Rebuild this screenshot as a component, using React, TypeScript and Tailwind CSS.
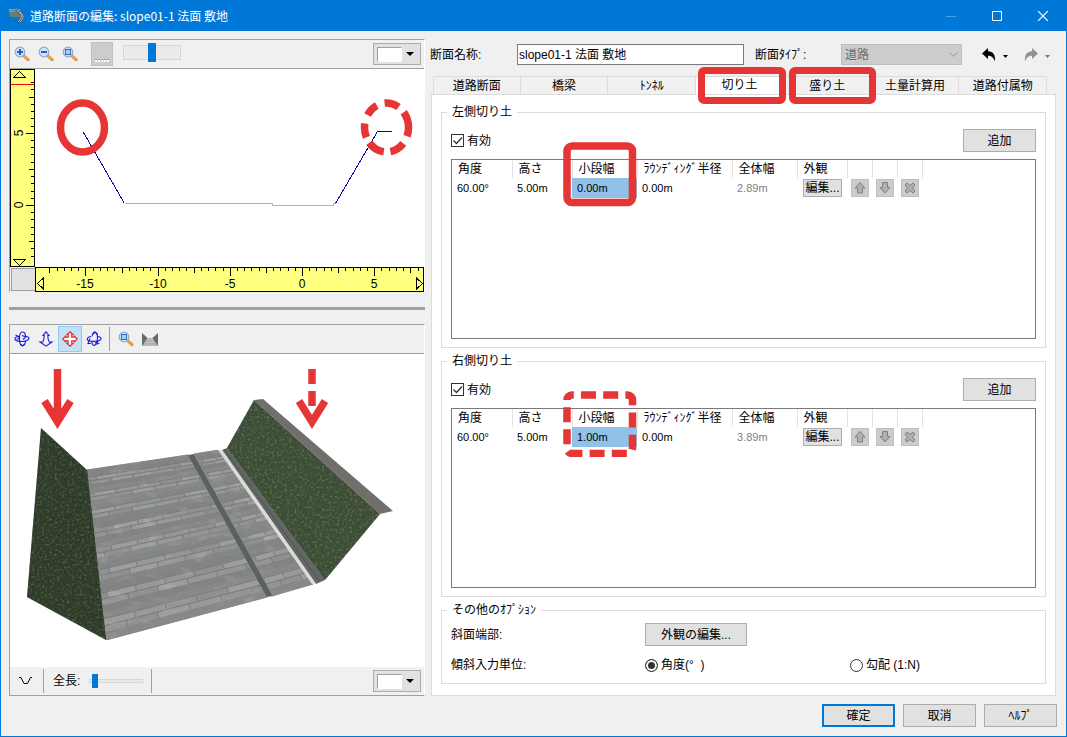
import type { ReactNode } from "react";

const CUT_ROWS = [
  { id: "left", title: "左側切り土", width: "0.00m", total: "2.89m", dashed: false },
  { id: "right", title: "右側切り土", width: "1.00m", total: "3.89m", dashed: true },
];

const TABS = ["道路断面", "橋梁", "ﾄﾝﾈﾙ", "切り土", "盛り土", "土量計算用", "道路付属物"];

type Point = [number, number];

function toPoints(points: Point[]) {
  return points.map((p) => p.map((n) => n.toFixed(1)).join(",")).join(" ");
}

function Button({ children, className = "", primary = false }: { children: ReactNode; className?: string; primary?: boolean }) {
  return (
    <button
      type="button"
      className={`flex h-[23px] items-center justify-center bg-[#e1e1e1] hover:bg-[#e5f1fb] ${
        primary ? "border-2 border-[#0078d7]" : "border border-[#adadad]"
      } ${className}`}
    >
      {children}
    </button>
  );
}

function MagnifierIcon({ kind }: { kind: "in" | "out" | "fit" }) {
  return (
    <svg className="size-4" viewBox="0 0 16 16" fill="none">
      <path d="M9.5 9.5L14 13.7" stroke="#c98a45" strokeWidth="3" strokeLinecap="round" />
      <path d="M10 9.8L14 13.4" stroke="#f7a53c" strokeWidth="1.8" strokeLinecap="round" />
      <circle cx="6" cy="6" r="4.8" fill="#cfe4fa" stroke="#93abc4" strokeWidth="1.2" />
      {kind === "in" && <path d="M3 6h6M6 3v6" stroke="#1f63c4" strokeWidth="2" />}
      {kind === "out" && <path d="M3 6h6" stroke="#1f63c4" strokeWidth="2" />}
      {kind === "fit" && <rect x="3.5" y="3.5" width="5" height="5" fill="#a9cdf5" stroke="#2d6fc4" />}
    </svg>
  );
}

function ColorDropdown({ label }: { label: string }) {
  return (
    <button type="button" aria-label={label} className="ml-auto flex h-[22px] w-12 items-center border border-[#adadad] bg-[#e1e1e1] pl-[3px]">
      <span className="h-[15px] w-[25px] border border-[#a0a0a0] border-r-white border-b-white bg-white" />
      <svg className="ml-1 h-1 w-2" viewBox="0 0 8 4">
        <path d="M0 0h8L4 4z" />
      </svg>
    </button>
  );
}

function ToolButton({ label, children, className = "" }: { label: string; children: ReactNode; className?: string }) {
  return (
    <button type="button" aria-label={label} title={label} className={`flex h-[26px] w-6 items-center justify-center ${className}`}>
      {children}
    </button>
  );
}

// position of a value on either ruler
const ORIGIN_X = 292;
const ORIGIN_Y = 136;
const HALF_UNIT = 7.22;

function tickLength(i: number) {
  if (i % 10 === 0) return 8;
  return i % 5 === 0 ? 5 : 3;
}

function CrossSection() {
  const xTicks = Array.from({ length: 52 }, (_, i) => i - 35);
  const yTicks = Array.from({ length: 25 }, (_, i) => i - 7);
  return (
    <svg className="block h-auto w-full bg-white" viewBox="0 0 414 223" shapeRendering="crispEdges">
      <rect x="0.5" y="0.5" width="24" height="197" fill="#ffff80" stroke="#000" />
      {yTicks.map((i) => {
        const y = Math.round(ORIGIN_Y - i * HALF_UNIT) + 0.5;
        return y > 3 && <path key={i} d={`M24 ${y}h-${tickLength(i)}`} stroke="#000" />;
      })}
      <path d="M1 15.5h23" stroke="#f00" />
      <path d="M3.5 8.5h12l-6-6zM3.5 190.5h12l-6 6z" fill="none" stroke="#000" />

      <rect x="0" y="198" width="25" height="25" fill="#f0f0f0" />
      <rect x="1.5" y="199.5" width="24" height="22" fill="#e1e1e1" stroke="#a0a0a0" />
      <rect x="25.5" y="198.5" width="388" height="24" fill="#ffff80" stroke="#000" />
      {xTicks.map((i) => (
        <path key={i} d={`M${Math.round(ORIGIN_X + i * HALF_UNIT) + 0.5} 199v${tickLength(i)}`} stroke="#000" />
      ))}
      <path d="M33.5 209v11l-6-5.500zM406.500 209v11l6-5.500z" fill="none" stroke="#000" />

      <g fontFamily="'Liberation Sans', sans-serif" fontSize="12" textAnchor="middle">
        {[-15, -10, -5, 0, 5].map((n) => (
          <text key={n} x={Math.round(ORIGIN_X + n * 2 * HALF_UNIT)} y="219">
            {n}
          </text>
        ))}
        <text transform="translate(13 64) rotate(-90)">5</text>
        <text transform="translate(13 136) rotate(-90)">0</text>
      </g>

      <path d="M115 134.500h147v2h61v-2h3" fill="none" stroke="#b4b4b4" />
      <path d="M73.500 63.500L114.500 134.500M325.500 134.500L367.500 62.500H382" fill="none" stroke="#0a0aaa" />
      <g fill="none" stroke="#e53535" strokeWidth="7.500" shapeRendering="auto">
        <ellipse cx="72.500" cy="58.500" rx="22" ry="24.500" />
        <ellipse cx="376.500" cy="58.500" rx="22" ry="24.500" pathLength="360" strokeDasharray="22 20 38 17 43 15 35 22 33 20 37 18 40 0" />
      </g>
    </svg>
  );
}

const PAVING: Point[] = [[77, 116], [178, 101], [257, 243], [96, 286]];
const WALKWAY: Point[] = [[184, 100], [209, 96], [303, 230], [262, 242]];

function pointOn([a, b, c, d]: Point[], u: number, t: number): Point {
  const v = t / (1.4 - 0.4 * t);
  const at = (k: 0 | 1) => (a[k] * (1 - u) + b[k] * u) * (1 - v) + (d[k] * (1 - u) + c[k] * u) * v;
  return [at(0), at(1)];
}

// two light courses of slabs, then two plain darker ones
function Bricks({ quad, rows, cols }: { quad: Point[]; rows: number; cols: number }) {
  const light = ["#969998", "#9b9e9d", "#8e9190", "#939695"];
  const dark = ["#838685", "#868988", "#818483"];
  const bricks = [];
  for (let r = 0; r < rows; r++) {
    const shades = r % 4 < 2 ? dark : light;
    for (let c = -1; c < cols; c++) {
      const offset = ((r * 37) % 10) / 10;
      const u0 = Math.max(0, (c + offset) / cols);
      const u1 = Math.min(1, (c + 1 + offset) / cols);
      if (u1 <= u0) continue;
      const corners = [
        pointOn(quad, u0, r / rows),
        pointOn(quad, u1, r / rows),
        pointOn(quad, u1, (r + 1) / rows),
        pointOn(quad, u0, (r + 1) / rows),
      ];
      const shade = shades[(r * 5 + (c + 1) * 3) % shades.length];
      bricks.push(
        <polygon
          key={`${r}-${c}`}
          points={toPoints(corners)}
          fill={shade}
          stroke={shades === light ? "#757877" : shade}
          strokeWidth="0.7"
        />,
      );
    }
  }
  return <>{bricks}</>;
}

function RoadScene() {
  return (
    <svg className="block h-auto w-full bg-white" viewBox="0 0 414 313">
      <filter id="grass" x="0" y="0" width="100%" height="100%" colorInterpolationFilters="sRGB">
        <feTurbulence type="fractalNoise" baseFrequency="0.4" numOctaves="3" seed="4" />
        <feColorMatrix values="0.4 0 0 0 -0.2  0.4 0 0 0 -0.19  0.3 0 0 0 -0.15  0 0 0 0 1" result="noise" />
        <feComposite in="SourceGraphic" in2="noise" operator="arithmetic" k2="1" k3="1" result="lit" />
        <feComposite in="lit" in2="SourceGraphic" operator="in" />
      </filter>
      <filter id="stone" x="0" y="0" width="100%" height="100%" colorInterpolationFilters="sRGB">
        <feTurbulence type="fractalNoise" baseFrequency="0.06 0.14" numOctaves="3" seed="9" />
        <feColorMatrix values="0.18 0 0 0 -0.1  0.18 0 0 0 -0.1  0.18 0 0 0 -0.1  0 0 0 0 1" result="noise" />
        <feComposite in="SourceGraphic" in2="noise" operator="arithmetic" k2="1" k3="1" result="lit" />
        <feComposite in="lit" in2="SourceGraphic" operator="in" />
      </filter>

      <g filter="url(#stone)">
        <Bricks quad={PAVING} rows={33} cols={5} />
        <Bricks quad={WALKWAY} rows={33} cols={2} />
      </g>
      <polygon points="178,101 184,100 263,242 257,243" fill="#5c6061" />
      <path d="M184 100L263 242" stroke="#8b8d8c" />
      <polygon points="212,96 217,94 315,226 306,230" fill="#626665" />
      <path d="M214 95L310 228" stroke="#505453" />
      <polygon points="208,96 212,96 306,230 302,230" fill="#dcdcd6" />
      <polygon points="31,74 77,116 96,286 17,243" fill="#2f3b2a" filter="url(#grass)" />
      <polygon points="217,94 244,46 370,160 315,226" fill="#3d4c37" filter="url(#grass)" />
      <polygon points="244,46 253,45 383,157 370,160" fill="#716f6b" />

      <g fill="none" stroke="#e53535" strokeWidth="7.500">
        <path d="M47.500 15v46" />
        <path d="M34.500 47l13 21 13-21" />
        <path d="M302 15v15M302 37v15" />
        <path d="M289 47l13 21 13-21" />
      </g>
      <path d="M42 54h11l-5.500 13z" fill="#e53535" />
    </svg>
  );
}

function RotateIcon({ tilted = false }: { tilted?: boolean }) {
  return (
    <svg className="size-4" viewBox="0 0 16 16" fill="none" stroke="#1a1ae6" strokeWidth="1.100">
      {tilted ? (
        <>
          <path d="M6 5.500C6.500 2.500 8 1 9 1s2.500 2 2.500 5-1 7-3 8.500C7 14.500 6 13 6 11" />
          <path d="M6.500 3.500L9 1l2.500 2.500M5 5.500C2 6 .5 7.500 1.500 9s5 1.500 8 1.200c3-.2 5.500-1.200 5.500-2.500S13.500 5.800 12 5.500" />
          <path d="M4 7.500L2 12.500h3M12 9.500l-1 4.500M9 11.500l4.500 1" />
        </>
      ) : (
        <>
          <path d="M5.500 5.500C5.800 3 7 1 8.500 1s2.800 2 3 4M11.500 9.500c-.2 3-1.500 5-3 5s-2.800-2-3-5V5" />
          <path d="M6.500 13l2 2 2.500-2M4 5.500C1.500 6 .5 7 1 8.200s3.500 2.300 7 2.300 7-1.500 7-3-2-2-3-2" />
          <path d="M1.500 4L5.500 6 3 9M8 4.500l4 1.500-3 2.500" />
        </>
      )}
    </svg>
  );
}

function Separator() {
  return <span className="h-6 w-px bg-[#a0a0a0]" />;
}

function Toolbar({ children, className = "" }: { children: ReactNode; className?: string }) {
  return <div className={`flex items-center bg-[#f0f0f0] pr-[3px] ${className}`}>{children}</div>;
}

function Preview() {
  return (
    <div className="flex min-w-0 flex-col">
      <section aria-label="断面図" className="border-t border-l border-[#a0a0a0] border-r border-r-white">
        <Toolbar className="h-[29px] border-b border-[#a0a0a0]">
          <ToolButton label="拡大"><MagnifierIcon kind="in" /></ToolButton>
          <ToolButton label="縮小"><MagnifierIcon kind="out" /></ToolButton>
          <ToolButton label="全体表示"><MagnifierIcon kind="fit" /></ToolButton>
          <button type="button" aria-label="グリッド" className="ml-[9px] flex h-6 w-[22px] items-end justify-center border border-[#c0c0c0] bg-[#cccccc] pb-[3px]">
            <svg className="h-[3px] w-4" viewBox="0 0 16 3" fill="none" shapeRendering="crispEdges">
              <path d="M1 .5h15" stroke="#999" strokeDasharray="2 1" />
              <path d="M1 2h15" stroke="#fff" strokeWidth="2" strokeDasharray="2 1" />
            </svg>
          </button>
          <input
            type="range"
            aria-label="グリッド間隔"
            defaultValue={50}
            className="-mt-1 ml-2.5 h-[19px] w-[58px] appearance-none bg-transparent [&::-webkit-slider-runnable-track]:h-[15px] [&::-webkit-slider-runnable-track]:border [&::-webkit-slider-runnable-track]:border-[#d6d6d6] [&::-webkit-slider-runnable-track]:bg-[#eaeaea] [&::-webkit-slider-thumb]:-mt-[3px] [&::-webkit-slider-thumb]:h-[19px] [&::-webkit-slider-thumb]:w-2 [&::-webkit-slider-thumb]:appearance-none [&::-webkit-slider-thumb]:bg-[#0078d7]"
          />
          <ColorDropdown label="背景色" />
        </Toolbar>
        <CrossSection />
      </section>

      <div className="mt-[15px] mb-3.5 h-[3px] bg-[#a0a0a0]" />

      <section aria-label="3D表示" className="border border-[#a0a0a0] border-r-white">
        <Toolbar className="h-[29px] border-b border-[#a0a0a0]">
          <ToolButton label="回転"><RotateIcon /></ToolButton>
          <ToolButton label="上下">
            <svg className="size-4" viewBox="0 0 16 16" fill="none" stroke="#1a1ae6" strokeWidth="1.100">
              <path d="M8 .8l3 3.700H9.800c0 3 .4 5 1.400 6.500h2.800L8 15.200 2 11h2.800c1-1.500 1.400-3.500 1.400-6.500H5z" />
            </svg>
          </ToolButton>
          <ToolButton label="移動" className="border border-[#90c8f6] bg-[#c4e0f5]">
            <svg className="size-4 shrink-0" viewBox="0 0 16 16" fill="#fff" stroke="#e02a2a" strokeWidth="1.200">
              <path d="M8 .8l2.800 2.700H9.800v2.700h2.700V5.200L15.200 8l-2.700 2.800V9.800H9.800v2.700h1L8 15.200l-2.800-2.700h1V9.800H3.500v1L.8 8l2.700-2.800v1h2.700V3.500h-1z" />
            </svg>
          </ToolButton>
          <ToolButton label="自由回転"><RotateIcon tilted /></ToolButton>
          <span className="ml-[3px] flex"><Separator /></span>
          <ToolButton label="拡大表示" className="ml-1"><MagnifierIcon kind="fit" /></ToolButton>
          <ToolButton label="断面表示">
            <svg className="size-4" viewBox="0 0 16 16">
              <path d="M5 7h6l5 8H0z" fill="#b4b4b4" />
              <path d="M0 2l5.500 5L0 15zM16 2l-5.500 5 5.500 8z" fill="#6a6a6a" />
              <path d="M6 8v7M10 8v7" stroke="#e4e4e4" strokeDasharray="1 2" />
            </svg>
          </ToolButton>
        </Toolbar>
        <RoadScene />
        <Toolbar className="h-7">
          <ToolButton label="断面形状" className="ml-[3px]">
            <svg className="h-3 w-4" viewBox="0 0 16 12" fill="none" stroke="#000">
              <path d="M2 2.500h2l3 6h3.500l3-6H15" />
            </svg>
          </ToolButton>
          <span className="ml-1.5 flex"><Separator /></span>
          <label htmlFor="length" className="ml-[9px] leading-4">全長:</label>
          <input
            id="length"
            type="range"
            defaultValue={3}
            className="ml-[9px] h-3.5 w-[54px] appearance-none bg-transparent [&::-webkit-slider-runnable-track]:h-1 [&::-webkit-slider-runnable-track]:border [&::-webkit-slider-runnable-track]:border-[#d6d6d6] [&::-webkit-slider-runnable-track]:bg-[#e7eaea] [&::-webkit-slider-thumb]:-mt-1.5 [&::-webkit-slider-thumb]:h-3.5 [&::-webkit-slider-thumb]:w-1.5 [&::-webkit-slider-thumb]:appearance-none [&::-webkit-slider-thumb]:bg-[#0078d7]"
          />
          <span className="ml-2 flex"><Separator /></span>
          <ColorDropdown label="3D背景色" />
        </Toolbar>
      </section>
    </div>
  );
}

function RowButton({ label, children }: { label: string; children: ReactNode }) {
  return (
    <button type="button" disabled aria-label={label} className="ml-1 flex size-[18px] items-center justify-center border border-[#bfbfbf] bg-[#cccccc]">
      <svg className="size-3" viewBox="0 0 12 12" fill="#b0b0b0" stroke="#808080">
        {children}
      </svg>
    </button>
  );
}

function CutGroup({ id, title, width, total, dashed }: (typeof CUT_ROWS)[number]) {
  const th = "border-r border-[#e3e3e3] p-0 pl-1.5 text-left font-normal";
  const td = "p-0 pl-[5px] text-[11px]";
  return (
    <fieldset className="min-w-0 border border-[#dcdcdc] px-[9px] pb-2">
      <legend className="-ml-1 px-[5px] leading-4">{title}</legend>
      <div className="mt-[9px] flex items-center justify-between">
        <label htmlFor={`${id}-enabled`} className="flex items-center gap-[3px] leading-4">
          <input
            id={`${id}-enabled`}
            type="checkbox"
            defaultChecked
            className="peer size-[13px] appearance-none border border-[#333] bg-white"
          />
          <svg className="pointer-events-none -ml-4 hidden size-[13px] peer-checked:block" viewBox="0 0 13 13" fill="none" stroke="#333" strokeWidth="1.300">
            <path d="M2.500 6.500l3 3 5.500-6" />
          </svg>
          有効
        </label>
        <Button className="w-[73px]">追加</Button>
      </div>
      <div className="mt-[7px] min-h-[180px] border border-[#7a7a7a]">
        <table className="w-[470px] table-fixed border-collapse leading-4 whitespace-nowrap">
          <colgroup>
            <col className="w-[60px]" />
            <col className="w-[60px]" />
            <col className="w-[65px]" />
            <col className="w-[95px]" />
            <col className="w-[65px]" />
            <col className="w-[50px]" />
            <col className="w-[25px]" />
            <col className="w-[25px]" />
            <col className="w-[25px]" />
          </colgroup>
          <thead>
            <tr className="h-[18px]">
              <th className={th}>角度</th>
              <th className={th}>高さ</th>
              <th className={`relative ${th}`}>
                小段幅
                <svg className="pointer-events-none absolute -top-[18px] -left-[10px] h-[66px] w-[74px]" viewBox="0 0 74 66" fill="none" stroke="#e53535" strokeWidth="7.500">
                  <rect x="4" y="4" width="65.500" height={dashed ? 58.5 : 56.5} rx="5" strokeDasharray={dashed ? "15 7.200" : undefined} strokeDashoffset={dashed ? -9 : undefined} />
                </svg>
              </th>
              <th className={th}>ﾗｳﾝﾃﾞｨﾝｸﾞ半径</th>
              <th className={th}>全体幅</th>
              <th className={th}>外観</th>
              <th className={th} />
              <th className={th} />
              <th className={th} />
            </tr>
          </thead>
          <tbody>
            <tr className="h-5">
              <td className={td}>60.00°</td>
              <td className={td}>5.00m</td>
              <td className={`bg-[#91c1e7] ${td}`}>{width}</td>
              <td className={td}>0.00m</td>
              <td className={`text-[#808080] ${td}`}>{total}</td>
              <td className="p-0 pl-1.5">
                <button type="button" className="flex h-[18px] w-[39px] items-center justify-center border border-[#adadad] bg-[#e1e1e1]">
                  編集...
                </button>
              </td>
              <td className="p-0">
                <RowButton label="上へ"><path d="M6 .5L11 6H8.500v5h-5V6H1z" /></RowButton>
              </td>
              <td className="p-0">
                <RowButton label="下へ"><path d="M6 11L11 5.500H8.500V.5h-5v5H1z" /></RowButton>
              </td>
              <td className="p-0">
                <RowButton label="削除">
                  <path d="M1 3L3 1l3 2.500L9 1l2 2-2.500 3L11 9l-2 2-3-2.500L3 11 1 9l2.500-3z" />
                </RowButton>
              </td>
            </tr>
          </tbody>
        </table>
      </div>
    </fieldset>
  );
}

function Options() {
  const radio =
    "size-[13px] appearance-none rounded-full border border-[#333] bg-white checked:bg-[#333] checked:shadow-[inset_0_0_0_2px_#fff]";
  return (
    <fieldset className="min-w-0 border border-[#dcdcdc] px-[9px] pb-2.5">
      <legend className="-ml-1 px-[5px] leading-4">その他のｵﾌﾟｼｮﾝ</legend>
      <div className="mt-[5px] grid grid-cols-[194px_205px_1fr] items-center gap-y-[11px] leading-4">
        <span>斜面端部:</span>
        <Button className="w-[102px]">外観の編集...</Button>
        <span />
        <span>傾斜入力単位:</span>
        <label htmlFor="unit-angle" className="flex items-center gap-[3px]">
          <input id="unit-angle" type="radio" name="unit" defaultChecked className={radio} />
          角度(°&nbsp; )
        </label>
        <label htmlFor="unit-ratio" className="flex items-center gap-[3px]">
          <input id="unit-ratio" type="radio" name="unit" className={radio} />
          勾配 (1:N)
        </label>
      </div>
    </fieldset>
  );
}

function UndoArrow({ flipped = false }: { flipped?: boolean }) {
  return (
    <svg className="size-3.5" viewBox="0 0 14 14" fill={flipped ? "#919191" : "#000"}>
      <path
        transform={flipped ? "translate(14 0) scale(-1 1)" : undefined}
        d="M0 5.500L6 0v3.200c5 0 8 3.800 6.800 10.300C11.500 9.500 9.500 7.800 6 7.800V11z"
      />
    </svg>
  );
}

function Caret({ className }: { className: string }) {
  return (
    <svg className={`h-[3px] w-[5px] ${className}`} viewBox="0 0 5 3">
      <path d="M0 0h5L2.500 3z" />
    </svg>
  );
}

function Settings() {
  return (
    <div className="flex min-w-0 flex-col">
      <div className="mt-[5px] -ml-px flex h-[21px] items-center leading-4">
        <label htmlFor="section-name" className="w-[87px]">断面名称:</label>
        <input
          id="section-name"
          type="text"
          defaultValue="slope01-1 法面 敷地"
          className="h-[21px] min-w-0 flex-1 border border-[#7a7a7a] bg-white px-px pb-[3px] outline-none"
        />
        <label htmlFor="section-type" className="ml-[11px] w-[86px]">断面ﾀｲﾌﾟ:</label>
        <span className="relative">
          <select id="section-type" disabled className="h-[21px] w-[121px] appearance-none border border-[#bfbfbf] bg-[#cccccc] px-[3px] leading-4 text-[#6d6d6d] opacity-100">
            <option>道路</option>
          </select>
          <svg className="pointer-events-none absolute top-2 right-1 h-[5px] w-[9px]" viewBox="0 0 9 5" fill="none" stroke="#9a9a9a">
            <path d="M.5 .5l4 4 4-4" />
          </svg>
        </span>
        <button type="button" aria-label="元に戻す" className="ml-5 flex items-center">
          <UndoArrow />
          <Caret className="mt-1 ml-[7px] fill-black" />
        </button>
        <button type="button" aria-label="やり直し" disabled className="mr-2 ml-4 flex items-center">
          <UndoArrow flipped />
          <Caret className="mt-1 ml-[7px] fill-[#777]" />
        </button>
      </div>

      <div role="tablist" className="mt-[11px] mr-[11px] ml-0.5 grid grid-cols-7">
        {TABS.map((tab) => {
          const selected = tab === "切り土";
          const marked = selected || tab === "盛り土";
          return (
            <button
              key={tab}
              type="button"
              role="tab"
              aria-selected={selected}
              className={`relative h-[18px] border-t border-r border-[#dcdcdc] leading-4 first:border-l ${selected ? "z-20 -mb-px bg-white pb-1" : "bg-[#f0f0f0]"} ${marked ? "z-10" : ""}`}
            >
              {tab}
              {marked && (
                <span
                  className={`pointer-events-none absolute -top-[10px] -bottom-[10px] rounded-md border-[7px] border-[#e53535] ${selected ? "-right-[3px] left-0.5" : "-right-[5px] left-[5px]"}`}
                />
              )}
            </button>
          );
        })}
      </div>
      <div role="tabpanel" className="mr-0.5 flex flex-1 flex-col gap-[5px] border border-[#dcdcdc] bg-white px-[9px] pt-[9px] pb-[11px]">
        {CUT_ROWS.map((row) => (
          <CutGroup key={row.id} {...row} />
        ))}
        <Options />
      </div>
    </div>
  );
}

function TitleBar() {
  const control = "flex h-full w-[46px] items-center justify-center hover:bg-white/10";
  return (
    <header className="flex h-[30px] items-center bg-[#0078d7] pl-2 text-white">
      <svg className="size-4" viewBox="0 0 16 16">
        <path d="M0 1h11l2 8H1z" fill="#5f8272" />
        <path d="M0 1h11l1 3H0z" fill="#7f9698" />
        <path d="M5 2c7 0 11 4 10 8-1 3-4 5-8 5 3-2 5-4 4-7S8 4 5 2z" fill="#4b4b4b" />
        <path d="M8 3c5 2 6 7 1 11M11 4c4 3 4 7 0 10" fill="none" stroke="#ddd" strokeWidth=".8" />
      </svg>
      <h1 className="ml-[5px] font-['Noto_Sans_CJK_JP',sans-serif] text-xs leading-4">道路断面の編集: slope01-1 法面 敷地</h1>
      <div className="ml-auto flex h-full">
        <button type="button" aria-label="最小化" disabled className={control}>
          <svg className="size-2.5" viewBox="0 0 10 10" stroke="#4d9fe2"><path d="M0 5.500h10" /></svg>
        </button>
        <button type="button" aria-label="最大化" className={control}>
          <svg className="size-2.5" viewBox="0 0 10 10" fill="none" stroke="#fff"><path d="M.5 .5h9v9h-9z" /></svg>
        </button>
        <button type="button" aria-label="閉じる" className={control}>
          <svg className="size-2.5" viewBox="0 0 10 10" fill="none" stroke="#fff" strokeWidth="1.200"><path d="M0 0l10 10M10 0L0 10" /></svg>
        </button>
      </div>
    </header>
  );
}

export default function App() {
  return (
    <div className="flex min-h-screen flex-col border border-[#0078d7] bg-[#f0f0f0] font-['Liberation_Sans','Noto_Sans_CJK_JP',sans-serif] text-xs text-black">
      <TitleBar />
      <main className="grid grid-cols-[416fr_627fr] gap-x-1.5 px-2 pt-2">
        <Preview />
        <Settings />
      </main>
      <footer className="flex justify-end gap-2 px-[9px] pt-2 pb-[9px] leading-4">
        <Button primary className="w-[73px]">確定</Button>
        <Button className="w-[73px]">取消</Button>
        <Button className="w-[73px]">ﾍﾙﾌﾟ</Button>
      </footer>
    </div>
  );
}
